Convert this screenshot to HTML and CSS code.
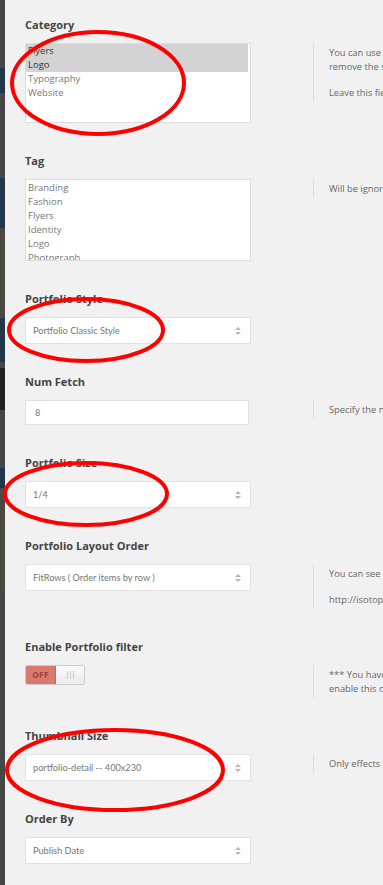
FILE: index.html
```html
<!DOCTYPE html>
<html lang="en">

<head>
  <meta charset="UTF-8">
  <meta name="viewport" content="width=device-width, initial-scale=1.0">
  <title>Portfolio Options</title>
  <link rel="stylesheet" href="styles.css">
</head>

<body>
  <div class="sidebar">
    <span class="seg" style="height: 68px"></span>
    <span class="seg blue" style="height: 25px"></span>
    <span class="seg" style="height: 85px"></span>
    <span class="seg blue" style="height: 50px"></span>
    <span class="seg warm" style="height: 90px"></span>
    <span class="seg blue" style="height: 44px"></span>
    <span class="seg" style="height: 6px"></span>
    <span class="seg black" style="height: 42px"></span>
    <span class="seg" style="height: 58px"></span>
    <span class="seg blue" style="height: 20px"></span>
    <span class="seg warm" style="height: 105px"></span>
    <span class="seg"></span>
  </div>

  <div class="options">
    <div class="field">
      <h4 class="label">Category</h4>
      <div class="field-body">
        <div class="input-wrap">
          <div class="listbox cat">
            <div class="opt selected">Flyers</div>
            <div class="opt selected">Logo</div>
            <div class="opt">Typography</div>
            <div class="opt">Website</div>
          </div>
        </div>
        <div class="help">
          <p>You can use Ctrl/Command key to select multiple categories or<br>remove the selected category (s).</p>
          <p>Leave this field blank if you want all categories to be selected.</p>
        </div>
      </div>
    </div>

    <div class="field">
      <h4 class="label">Tag</h4>
      <div class="field-body">
        <div class="input-wrap">
          <div class="listbox tag">
            <div class="opt">Branding</div>
            <div class="opt">Fashion</div>
            <div class="opt">Flyers</div>
            <div class="opt">Identity</div>
            <div class="opt">Logo</div>
            <div class="opt">Photograph</div>
            <div class="opt">Typography</div>
          </div>
        </div>
        <div class="help">
          <p>Will be ignored when the category filter is enabled.</p>
        </div>
      </div>
    </div>

    <div class="field">
      <h4 class="label">Portfolio Style</h4>
      <div class="field-body">
        <div class="input-wrap">
          <div class="select">Portfolio Classic Style</div>
        </div>
      </div>
    </div>

    <div class="field">
      <h4 class="label">Num Fetch</h4>
      <div class="field-body">
        <div class="input-wrap">
          <div class="text-input">8</div>
        </div>
        <div class="help">
          <p>Specify the number of portfolios you want to pull out.</p>
        </div>
      </div>
    </div>

    <div class="field">
      <h4 class="label">Portfolio Size</h4>
      <div class="field-body">
        <div class="input-wrap">
          <div class="select">1/4</div>
        </div>
      </div>
    </div>

    <div class="field">
      <h4 class="label">Portfolio Layout Order</h4>
      <div class="field-body">
        <div class="input-wrap">
          <div class="select">FitRows ( Order items by row )</div>
        </div>
        <div class="help">
          <p>You can see an example of these two layout here</p>
          <p>http://isotope.metafizzy.co/demos/layout-modes.html</p>
        </div>
      </div>
    </div>

    <div class="field">
      <h4 class="label">Enable Portfolio filter</h4>
      <div class="field-body">
        <div class="input-wrap">
          <div class="toggle">
            <span class="toggle-off">OFF</span>
            <span class="toggle-grip"><i></i><i></i><i></i></span>
          </div>
        </div>
        <div class="help">
          <p>*** You have to select only 1 ( or none ) portfolio category when<br>enable this option</p>
        </div>
      </div>
    </div>

    <div class="field">
      <h4 class="label">Thumbnail Size</h4>
      <div class="field-body">
        <div class="input-wrap">
          <div class="select">portfolio-detail -- 400x230</div>
        </div>
        <div class="help">
          <p>Only effects to standard and gallery post format</p>
        </div>
      </div>
    </div>

    <div class="field">
      <h4 class="label">Order By</h4>
      <div class="field-body">
        <div class="input-wrap">
          <div class="select">Publish Date</div>
        </div>
      </div>
    </div>
  </div>

  <!-- red marker circles drawn over the screenshot -->
  <svg class="marks" width="383" height="885" viewBox="0 0 383 885">
    <ellipse cx="98" cy="83" rx="86" ry="51" />
    <ellipse cx="86" cy="330" rx="77" ry="31" />
    <ellipse cx="86" cy="494" rx="81" ry="31" />
    <ellipse cx="115" cy="770" rx="108" ry="40" />
  </svg>
</body>

</html>
```

FILE: styles.css
```css
body {
  margin: 0;
  height: 885px;
  display: flex;
  overflow: hidden;
  position: relative;
  background: #f1f1f1;
  font-family: 'Open Sans', 'Liberation Sans', sans-serif;
  color: #444;
}

.sidebar {
  width: 5px;
  flex: none;
  display: flex;
  flex-direction: column;
}

.seg {
  display: block;
  background: #464646;
}

.seg:last-child {
  flex: 1;
}

.seg.blue {
  background: #23374a;
}

.seg.warm {
  background: #4b4843;
}

.seg.black {
  background: #222;
}

.options {
  padding: 17px 0 0 20px;
}

.field {
  margin-bottom: 30px;
}

.label {
  margin: 0 0 10px;
  font-size: 11px;
  line-height: 16px;
  font-weight: 700;
  color: #444;
}

.field-body {
  display: flex;
  align-items: flex-start;
}

.input-wrap {
  width: 288px;
  flex: none;
}

.help {
  width: 320px;
  flex: none;
  border-left: 1px solid #ddd;
  padding: 3px 0 2px 15px;
  font-size: 9.3px;
  line-height: 14px;
  color: #666;
  white-space: nowrap;
}

.help p {
  margin: 0 0 12px;
}

.help p:last-child {
  margin-bottom: 0;
}

.listbox {
  width: 222px;
  background: #fff;
  border: 1px solid #ddd;
  padding-right: 2px;
  overflow: hidden;
  font-size: 9.5px;
  line-height: 14px;
  color: #777;
}

.listbox.cat {
  height: 78px;
}

.listbox.tag {
  height: 79px;
  padding-top: 1px;
}

.opt {
  padding-left: 2px;
}

.opt.selected {
  background: #d3d3d3;
  color: #333;
}

.select,
.text-input {
  width: 217px;
  height: 25px;
  padding-left: 7px;
  background: #fff;
  border: 1px solid #e2e2e2;
  font-family: Lato, 'Open Sans', sans-serif;
  font-size: 9.2px;
  line-height: 25px;
  color: #777;
}

.select {
  position: relative;
}

.select::before,
.select::after {
  content: '';
  position: absolute;
  right: 9px;
  border-left: 3px solid transparent;
  border-right: 3px solid transparent;
}

.select::before {
  top: 9px;
  border-bottom: 3px solid #b5b5b5;
}

.select::after {
  top: 14px;
  border-top: 3px solid #b5b5b5;
}

.text-input {
  width: 213px;
  height: 23px;
  line-height: 23px;
  padding-left: 9px;
}

.toggle {
  width: 58px;
  height: 18px;
  display: flex;
  border: 1px solid #ccc;
  border-radius: 2px;
  overflow: hidden;
}

.toggle-off {
  width: 29px;
  background: #d97a6e;
  border-right: 1px solid #c2665b;
  font-size: 8px;
  line-height: 18px;
  font-weight: 700;
  color: #9a4238;
  text-align: center;
  letter-spacing: 0.5px;
}

.toggle-grip {
  flex: 1;
  display: flex;
  justify-content: center;
  align-items: center;
  gap: 2px;
  background: linear-gradient(#fafafa, #ebebeb);
}

.toggle-grip i {
  width: 1px;
  height: 8px;
  background: #c9c9c9;
}

.marks {
  position: absolute;
  top: 0;
  left: 0;
  pointer-events: none;
}

.marks ellipse {
  fill: none;
  stroke: #f00;
  stroke-width: 4;
}
```
